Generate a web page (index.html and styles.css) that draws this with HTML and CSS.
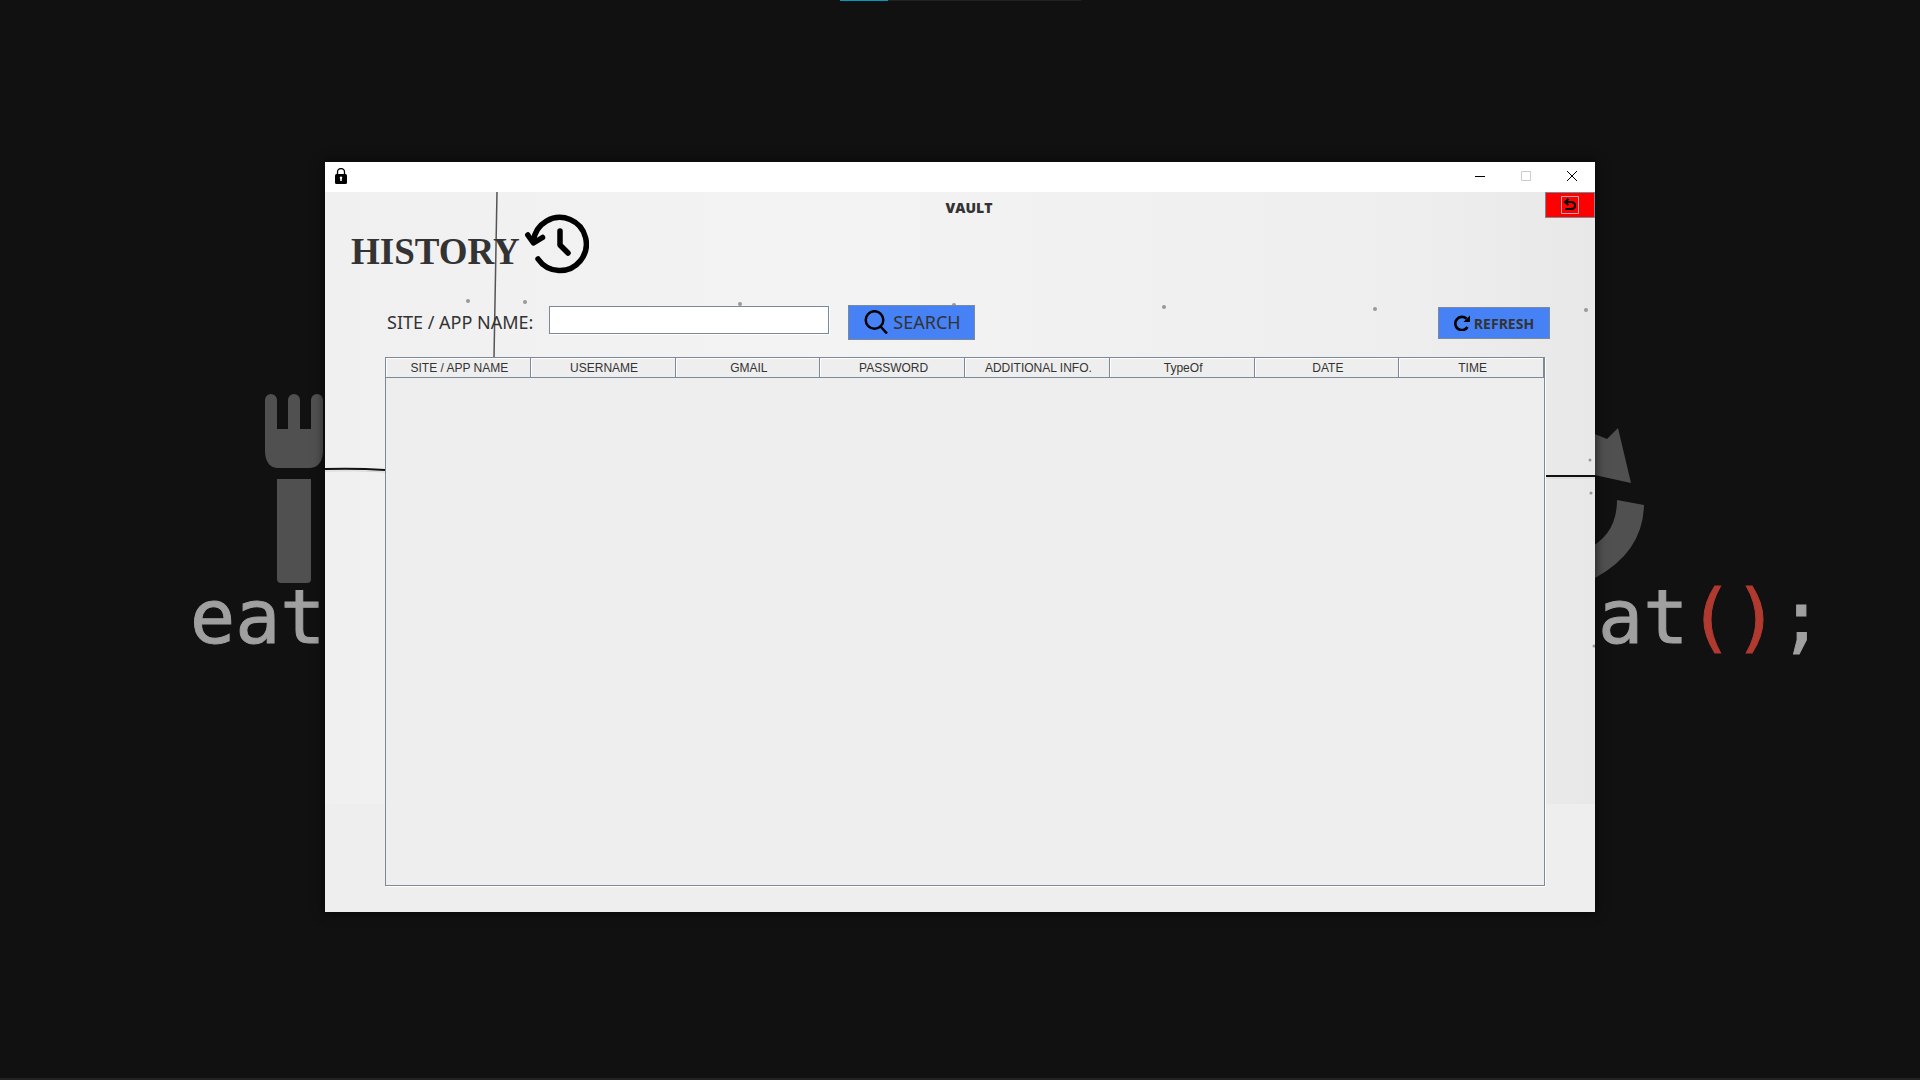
FILE: index.html
```html
<!DOCTYPE html>
<html lang="en">
<head>
<meta charset="utf-8">
<title>Vault</title>
<link rel="stylesheet" href="styles.css">
</head>
<body>
<div class="desktop">
  <svg class="wallpaper" viewBox="0 0 1920 1080" preserveAspectRatio="xMidYMid slice" aria-hidden="true">
    <path class="taskline" d="M840 0h241v1H840zM0 1078h1920v2H0z"/>
    <path class="progress" d="M840 0h48v1h-48z"/>
    <path class="art" d="M265 400a6 6 0 0 1 12 0v29h11v-29a6 6 0 0 1 12 0v29h11v-29a6 6 0 0 1 12 0v52q-1 15-13 16h-33q-11-1-12-16z"/>
    <path class="art" d="M277 479h34v100q0 4-4 4h-26q-4 0-4-4z"/>
    <path class="art" d="M1590 432l17 7 11-11 13 55-41-9zM1617 500l27 5q-1 47-49 73l-10 3v-31q32-14 32-50z"/>
    <text class="code" x="190" y="643">eat</text>
    <text class="code" x="1598" y="643">at<tspan class="paren">()</tspan>;</text>
  </svg>

  <main class="window">
    <header class="titlebar">
      <svg class="lock" viewBox="0 0 12 16" aria-hidden="true">
        <path d="M2.500 7V4a3.500 3.500 0 0 1 7 0v3" fill="none" stroke="#000" stroke-width="1.300"/>
        <rect y="6" width="12" height="10" rx="1.500"/>
        <path d="M6 8.500a1.300 1.300 0 0 1 .8 2.300V13H5.200v-2.200A1.300 1.300 0 0 1 6 8.500z" fill="#fff"/>
      </svg>
      <div class="controls">
        <button class="control" aria-label="Minimize"><svg viewBox="0 0 10 10"><path d="M0 5.500h10"/></svg></button>
        <button class="control" aria-label="Maximize" disabled><svg viewBox="0 0 10 10"><path d="M.5.5h9v9h-9z"/></svg></button>
        <button class="control" aria-label="Close"><svg viewBox="0 0 10 10"><path d="M0 0l10 10M10 0L0 10"/></svg></button>
      </div>
    </header>

    <section class="panel">
      <svg class="wall" viewBox="0 0 1270 612" preserveAspectRatio="none" aria-hidden="true">
        <defs>
          <linearGradient id="plaster">
            <stop offset="0" stop-color="#f0f0f0"/>
            <stop offset=".4" stop-color="#f3f3f3"/>
            <stop offset=".85" stop-color="#eeeeef"/>
            <stop offset="1" stop-color="#e8e8e9"/>
          </linearGradient>
        </defs>
        <path d="M0 0h1270v612H0z" fill="url(#plaster)"/>
        <path d="M172 0L169 165" stroke="#555" stroke-width="1.500"/>
        <path d="M0 277q30-1 60 1M1221 284h49" fill="none" stroke="#111" stroke-width="2"/>
        <path d="M0 279q30-1 60 1M1221 286h49" fill="none" stroke="#d8d5d0"/>
        <g fill="#999">
          <circle cx="143" cy="109" r="2"/><circle cx="200" cy="110" r="2"/>
          <circle cx="415" cy="112" r="2"/><circle cx="629" cy="113" r="2"/>
          <circle cx="839" cy="115" r="2"/><circle cx="1050" cy="117" r="2"/>
          <circle cx="1261" cy="118" r="2"/><circle cx="1265" cy="268" r="1.500"/>
          <circle cx="1266" cy="301" r="1.500"/><circle cx="1269" cy="454" r="1.500"/>
        </g>
      </svg>

      <div class="topline">
        <p class="app-name">VAULT</p>
        <button class="back" aria-label="Back">
          <svg viewBox="0 0 18 18"><path d="M7.500 3L4 6l3.500 3M4.500 6H10q4 0 4 3.500T10 13H4" fill="none" stroke="#000" stroke-width="2"/><path d="M.5.5h17v17H.5z" fill="none" stroke="#b8a8b8"/></svg>
        </button>
      </div>

      <div class="heading">
        <h1>HISTORY</h1>
        <svg class="clock" viewBox="0 0 64 60" fill="none" stroke="#000" stroke-width="5.500" stroke-linecap="round" stroke-linejoin="round" aria-hidden="true">
          <path d="M8.500 27A26.500 26.500 0 1 1 13 45"/>
          <path d="M2.800 21L8.500 29 17.500 23.500M35 17v14l8 8"/>
        </svg>
      </div>

      <form class="search">
        <label for="site">SITE / APP NAME:</label>
        <input id="site" type="text">
        <button class="blue find" type="button">
          <svg viewBox="0 0 24 24" fill="none" stroke="#000" stroke-width="2.500" aria-hidden="true"><circle cx="10.500" cy="10" r="8.800"/><path d="M16.500 16.500l6.500 7"/></svg>
          SEARCH
        </button>
        <button class="blue refresh" type="button">
          <svg viewBox="0 0 16 16" aria-hidden="true"><path d="M12.500 3.800A6.600 6.600 0 1 0 13.500 12" fill="none" stroke="#000" stroke-width="2.700"/><path d="M16 .5V7H9.500z"/></svg>
          REFRESH
        </button>
      </form>

      <div class="records">
        <table>
          <thead>
            <tr><th>SITE / APP NAME</th><th>USERNAME</th><th>GMAIL</th><th>PASSWORD</th><th>ADDITIONAL INFO.</th><th>TypeOf</th><th>DATE</th><th>TIME</th></tr>
          </thead>
          <tbody></tbody>
        </table>
      </div>
    </section>
  </main>
</div>
</body>
</html>
```
FILE: styles.css
```css
* { box-sizing: border-box; }

body {
  margin: 0;
  background: #111;
  color: #333;
  font-family: "Noto Sans", sans-serif;
}

button { font: inherit; color: inherit; padding: 0; }
h1, p { margin: 0; }
svg { display: block; }

.desktop {
  position: relative;
  display: grid;
  min-height: 100vh;
  padding: 162px 325px 168px;
}

.wallpaper {
  position: absolute;
  inset: 0;
  width: 100%;
  height: 100%;
}

.taskline { fill: #222; }
.progress { fill: #0099bc; }
.art { fill: #505050; }

.code {
  fill: #a0a0a0;
  stroke: #a0a0a0;
  stroke-width: 1px;
  font: 75px "DejaVu Sans Mono", monospace;
}

.paren { fill: #b03a30; stroke: #b03a30; }

.window {
  position: relative;
  display: flex;
  flex-direction: column;
  box-shadow: 0 0 10px 1px #0009;
}

.titlebar {
  display: flex;
  justify-content: space-between;
  align-items: center;
  height: 30px;
  padding: 0 0 2px 10px;
  background: #fff;
}

.lock { width: 12px; height: 16px; }
.controls { display: flex; }

.control {
  display: grid;
  place-items: center;
  width: 46px;
  height: 28px;
  border: 0;
  background: none;
}

.control svg {
  width: 10px;
  height: 10px;
  fill: none;
  stroke: #000;
}

.control:disabled svg { stroke: #ccc; }

.panel {
  position: relative;
  flex: 1;
  display: flex;
  flex-direction: column;
  background: #eee;
}

.wall {
  position: absolute;
  inset: 0 0 auto;
  width: 100%;
  height: 612px;
}

.topline, .heading, .search, .records { position: relative; }

.topline {
  display: grid;
  grid-template-columns: 50px 1fr 50px;
  height: 26px;
}

.app-name {
  grid-column: 2;
  padding: 6px 0 0 18px;
  font: 800 14px/20px "Open Sans", sans-serif;
  text-align: center;
}

.back {
  display: grid;
  place-items: center;
  border: 1px solid #7a8a99;
  background: #f00;
}

.back svg { width: 18px; height: 18px; }

.heading {
  display: flex;
  gap: 5px;
  height: 86px;
  padding: 0 26px;
}

.heading h1 {
  padding-top: 12px;
  font: bold 37px/44px "Liberation Serif", serif;
}

.clock { width: 64px; height: 60px; margin-top: -4px; }

.search {
  display: flex;
  align-items: center;
  height: 36px;
  padding: 0 45px 0 62px;
}

.search label { width: 162px; font-size: 18px; }

.search input {
  width: 280px;
  height: 28px;
  margin-bottom: 4px;
  padding: 2px 4px;
  border: 1px solid #7a8a99;
  background: #fff;
  box-shadow: 1px 1px #fff;
  font: 16px "Noto Sans", sans-serif;
}

.blue {
  display: flex;
  align-items: center;
  justify-content: center;
  border: 1px solid #7a8a99;
  background: #4682f5;
}

.find {
  gap: 5px;
  width: 127px;
  height: 35px;
  margin-left: 19px;
  padding-left: 2px;
  font-size: 18px;
}

.find svg { width: 24px; height: 24px; }

.refresh {
  gap: 4px;
  width: 112px;
  height: 32px;
  margin: 2px 0 0 auto;
  font: bold 14px "Open Sans", sans-serif;
}

.refresh svg { width: 16px; height: 16px; }

.records {
  flex: 1;
  margin: 17px 50px 26px 60px;
  border: 1px solid #7a8a99;
  background: #eee;
  box-shadow: 1px 1px #fff;
}

.records table {
  width: 100%;
  table-layout: fixed;
  border-collapse: separate;
  border-spacing: 0;
}

.records th {
  height: 20px;
  padding: 1px 0 0 3px;
  border-right: 1px solid #7a8a99;
  border-bottom: 1px solid #7a8a99;
  box-shadow: inset 1px 1px #fff;
  font: 12px/18px "Liberation Sans", sans-serif;
  text-align: center;
}
```
